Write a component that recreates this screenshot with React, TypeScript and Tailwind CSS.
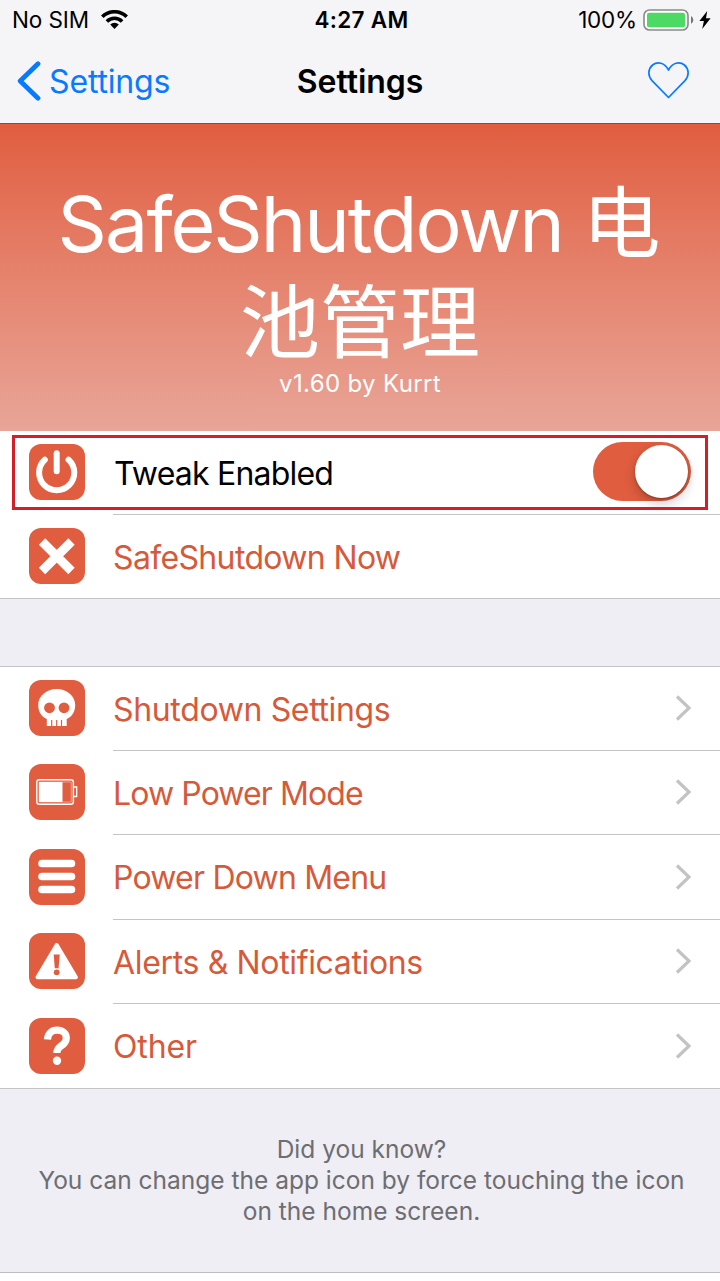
import type { ReactNode } from "react";

function StatusBar() {
  return (
    <div className="grid h-10 grid-cols-3 items-center text-[22.5px] leading-none text-black">
      <div className="flex items-center gap-3 pl-[12px]">
        <span className="tracking-[-0.1px]">No SIM</span>
        <svg width="27" height="20" viewBox="0 0 27 20" fill="none" stroke="#000" strokeWidth="3.6">
          <path d="M1.3 6.8a17.2 17.2 0 0 1 24.4 0" />
          <path d="M5.9 11.4a10.7 10.7 0 0 1 15.2 0" />
          <path d="M9.2 14.6a6.1 6.1 0 0 1 8.6 0L13.5 19z" fill="#000" stroke="none" />
        </svg>
      </div>
      <div className="pl-[3px] text-center font-semibold tracking-[0.3px]">4:27 AM</div>
      <div className="flex items-center justify-end pr-[9px]">
        <span className="tracking-[-0.2px]">100%</span>
        <svg className="ml-[6px]" width="51" height="22" viewBox="0 0 51 22">
          <rect x="1" y="1" width="44" height="20" rx="5.5" fill="#fff" stroke="#8a8a8c" strokeWidth="1.6" />
          <rect x="4" y="3.8" width="38" height="14.4" rx="2" fill="#4cd964" />
          <path d="M48 7.3c3 1 3 6.4 0 7.4z" fill="#777" />
        </svg>
        <svg className="ml-[5px]" width="12" height="18" viewBox="0 0 12 18">
          <path d="M8.2 0 0.4 10h4.500L3.2 18 11.6 7.300H7z" fill="#000" />
        </svg>
      </div>
    </div>
  );
}

function NavBar() {
  return (
    <div className="grid h-[83px] grid-cols-3 items-center text-[32px] leading-none">
      <div className="flex items-center gap-[8px] pl-[17px] text-[#087aff]">
        <svg className="-mt-px" width="24" height="40" viewBox="0 0 24 40" fill="none" stroke="currentColor" strokeWidth="4.8" strokeLinecap="round" strokeLinejoin="round">
          <path d="M21 2.8 3.2 20 21 37.2" />
        </svg>
        <span className="tracking-[-0.15px]">Settings</span>
      </div>
      <div className="text-center font-semibold tracking-[-0.05px] text-black">Settings</div>
      <div className="flex justify-end pr-[31px] pb-[3px]">
        <svg width="41" height="37" viewBox="0 0 41 37" fill="none" stroke="#087aff" strokeWidth="1.7" strokeLinejoin="round">
          <path d="M20.5 35.5 4 18.600C-.8 13.400.4 6.500 4.600 3c4.900-4 12-2.300 15.900 5 3.900-7.300 11-9 15.900-5 4.200 3.500 5.400 10.400.6 15.600z" />
        </svg>
      </div>
    </div>
  );
}

function IconTile({ children }: { children: ReactNode }) {
  return (
    <svg className="shrink-0" width="56" height="56" viewBox="0 0 56 56" fill="none">
      <rect width="56" height="56" rx="12" fill="#e05d3f" />
      {children}
    </svg>
  );
}

const icons = {
  power: (
    <g stroke="#fff" strokeLinecap="round">
      <path d="M15.8 15.700a17.600 17.600 0 1 0 23.800 0" strokeWidth="6" />
      <path d="M27.700 9.200v18" strokeWidth="6" />
    </g>
  ),
  close: <path d="m13 13.500 29.500 29.500m0-29.500L13 43" stroke="#fff" strokeWidth="9" />,
  skull: (
    <>
      <path d="M27.700 9C17.500 9 9.200 16.200 9.200 25c0 6.500 3 11.500 8.600 14v7h2.700h1.600v-6h1.200v6h3.800v-6h1.200v6h3.600v-6h1.200v6H37.700v-7c5.600-2.500 8.500-7.500 8.500-14 0-8.800-8.300-16-18.500-16z" fill="#fff" />
      <circle cx="20.500" cy="27.800" r="5.400" fill="#e05d3f" />
      <circle cx="35" cy="27.800" r="5.400" fill="#e05d3f" />
    </>
  ),
  battery: (
    <>
      <rect x="7.800" y="15.800" width="36.600" height="24.400" rx="2.500" stroke="#fff" strokeWidth="1.400" />
      <path d="M44.800 23h2.900v9.500h-2.900" stroke="#fff" strokeWidth="1.300" />
      <path d="M10 18h32.200v20H10z" stroke="#fff" strokeOpacity=".6" strokeWidth=".7" />
      <path d="M10 18h23.500v20H10z" fill="#fff" />
    </>
  ),
  menu: <path d="M13 14.500h29.500M13 27.500h29.500M13 40.500h29.500" stroke="#fff" strokeWidth="7.600" strokeLinecap="round" />,
  alert: (
    <>
      <path d="M27.700 12 8.500 44.300h38.400z" fill="#fff" stroke="#fff" strokeWidth="4" strokeLinejoin="round" />
      <path d="M24.700 21.500h6l-1.100 13.700h-3.800z" fill="#e05d3f" />
      <circle cx="27.700" cy="39.300" r="2.900" fill="#e05d3f" />
    </>
  ),
  help: (
    <>
      <path d="M18.500 21.500c.3-6 4.200-9.300 9.500-9.300 5.400 0 9.300 3 9.300 7.700 0 4-2.100 6-5.300 8.100-3 2-4.200 3.600-4.200 7" stroke="#fff" strokeWidth="7.200" />
      <circle cx="28" cy="42.800" r="4.200" fill="#fff" />
    </>
  ),
};

type RowProps = {
  icon: keyof typeof icons;
  label: string;
  size: string;
  tracking: string;
  chevron?: boolean;
  last?: boolean;
};

function Row({ icon, label, size, tracking, chevron, last }: RowProps) {
  return (
    <div className={`flex pl-[29px] ${size} ${last ? "border-b border-[#c4c4c6]" : ""}`}>
      <div className={`flex items-end ${last ? "pb-[14px]" : "pb-[15px]"}`}>
        <IconTile>{icons[icon]}</IconTile>
      </div>
      <div className={`ml-7 flex flex-1 items-center justify-between pr-[28px] text-[#d65a3a] ${last ? "" : "border-b border-[#c4c4c6]"}`}>
        <span className={`pt-[2px] text-[32px] leading-10 ${tracking}`}>{label}</span>
        {chevron && (
          <svg className="-mt-px" width="17" height="26" viewBox="0 0 17 26" fill="none" stroke="#c3c3c6" strokeWidth="3.2">
            <path d="m2 1.5 12 11.500L2 24.500" />
          </svg>
        )}
      </div>
    </div>
  );
}

export default function App() {
  return (
    <div className="h-[1281px] w-[720px] overflow-hidden bg-white font-['Inter','Noto_Sans_CJK_SC',sans-serif] font-normal">
      <header className="h-[124px] border-b border-[#8b4a3c] bg-[#f5f5f8]">
        <StatusBar />
        <NavBar />
      </header>

      <section className="flex h-[307px] flex-col items-center bg-linear-to-b from-[#e05d3f] to-[#e8a598] pt-[50px] text-white">
        <h1 className="text-center text-[80px] leading-[97px]">
          <span className="block whitespace-nowrap pr-[2px]">
            <span className="text-[77px] tracking-[-2px]">SafeShutdown </span>
            <span className="text-[78px]">电</span>
          </span>
          <span className="block">池管理</span>
        </h1>
        <p className="text-[24px] leading-[28px] tracking-[0.35px]">v1.60 by Kurrt</p>
      </section>

      <section>
        <div className="relative flex h-[84px] pl-[29px]">
          <div className="pt-[13px]">
            <IconTile>{icons.power}</IconTile>
          </div>
          <div className="ml-7 flex flex-1 items-center justify-between border-b border-[#c4c4c6] pr-[29px]">
            <span className="pt-[2px] pl-px text-[32px] leading-10 tracking-[-0.8px] text-black">Tweak Enabled</span>
            <button className="mb-[2px] flex h-[59px] w-[98px] items-center justify-end rounded-full bg-[#e05d3f] pr-[3px]" aria-label="Tweak Enabled">
              <span className="size-[53px] rounded-full bg-white shadow-[0_5px_12px_rgba(0,0,0,0.22),0_1px_2px_rgba(0,0,0,0.3)]" />
            </button>
          </div>
          <div className="pointer-events-none absolute top-[4px] left-[12px] h-[75px] w-[696px] border-3 border-[#d41f28]" />
        </div>
        <Row icon="close" label="SafeShutdown Now" size="h-[84px]" tracking="tracking-[-0.65px]" last />
      </section>

      <div className="h-[67px] bg-[#efeef4]" />

      <section className="border-t border-[#c4c4c6]">
        <Row icon="skull" label="Shutdown Settings" size="h-[84px]" tracking="tracking-[-0.35px]" chevron />
        <Row icon="battery" label="Low Power Mode" size="h-[84px]" tracking="tracking-[-0.9px]" chevron />
        <Row icon="menu" label="Power Down Menu" size="h-[85px]" tracking="tracking-[-0.8px]" chevron />
        <Row icon="alert" label="Alerts & Notifications" size="h-[84px]" tracking="tracking-[-0.35px]" chevron />
        <Row icon="help" label="Other" size="h-[85px]" tracking="tracking-[-0.15px]" chevron last />
      </section>

      <footer className="h-[184px] border-b border-[#bdbdc2] bg-[#efeef4] pt-[45px] pl-[3px] text-center text-[24.5px] leading-[31px] text-[#6d6d72]">
        <p>Did you know?</p>
        <p className="whitespace-nowrap">You can change the app icon by force touching the icon</p>
        <p>on the home screen.</p>
      </footer>
    </div>
  );
}
